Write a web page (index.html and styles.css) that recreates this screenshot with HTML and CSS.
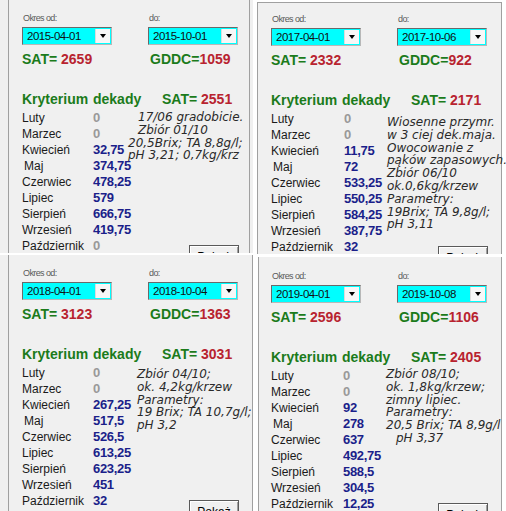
FILE: index.html
```html
<!DOCTYPE html>
<html lang="pl">
<head>
<meta charset="utf-8">
<title>Sumy temperatur aktywnych</title>
<link rel="stylesheet" href="styles.css">
</head>
<body>
<div class="sheet">
  <div class="col col-left">
    <section class="panel tl">
      <div class="frame">
        <div class="range">
          <div class="field"><span class="cap">Okres od:</span><div class="combo"><span class="val">2015-04-01</span><span class="drop"></span></div></div>
          <div class="field"><span class="cap">do:</span><div class="combo"><span class="val">2015-10-01</span><span class="drop"></span></div></div>
        </div>
        <div class="totals"><div><span class="g">SAT=</span> <span class="r">2659</span></div><div><span class="g">GDDC=</span><span class="r">1059</span></div></div>
        <div class="crit"><span class="k">Kryterium</span><span class="d">dekady</span><span>SAT= <span class="r">2551</span></span></div>
        <div class="body">
          <div class="notes"><div class="in">17/06 gradobicie.</div><div class="in">Zbiór 01/10</div><div>20,5Brix; TA 8,8g/l;</div><div>pH 3,21; 0,7kg/krz</div></div>
          <span class="m">Luty</span><span class="v zero">0</span>
          <span class="m">Marzec</span><span class="v zero">0</span>
          <span class="m">Kwiecień</span><span class="v">32,75</span>
          <span class="m maj">Maj</span><span class="v">374,75</span>
          <span class="m">Czerwiec</span><span class="v">478,25</span>
          <span class="m">Lipiec</span><span class="v">579</span>
          <span class="m">Sierpień</span><span class="v">666,75</span>
          <span class="m">Wrzesień</span><span class="v">419,75</span>
          <span class="m">Październik</span><span class="v zero">0</span>
          <button class="show" type="button">Pokaż</button>
        </div>
      </div>
    </section>
    <section class="panel bl">
      <div class="frame">
        <div class="range">
          <div class="field"><span class="cap">Okres od:</span><div class="combo"><span class="val">2018-04-01</span><span class="drop"></span></div></div>
          <div class="field"><span class="cap">do:</span><div class="combo"><span class="val">2018-10-04</span><span class="drop"></span></div></div>
        </div>
        <div class="totals"><div><span class="g">SAT=</span> <span class="r">3123</span></div><div><span class="g">GDDC=</span><span class="r">1363</span></div></div>
        <div class="crit"><span class="k">Kryterium</span><span class="d">dekady</span><span>SAT= <span class="r">3031</span></span></div>
        <div class="body">
          <div class="notes"><div>Zbiór 04/10;</div><div>ok. 4,2kg/krzew</div><div>Parametry:</div><div>19 Brix; TA 10,7g/l;</div><div>pH 3,2</div></div>
          <span class="m">Luty</span><span class="v zero">0</span>
          <span class="m">Marzec</span><span class="v zero">0</span>
          <span class="m">Kwiecień</span><span class="v">267,25</span>
          <span class="m maj">Maj</span><span class="v">517,5</span>
          <span class="m">Czerwiec</span><span class="v">526,5</span>
          <span class="m">Lipiec</span><span class="v">613,25</span>
          <span class="m">Sierpień</span><span class="v">623,25</span>
          <span class="m">Wrzesień</span><span class="v">451</span>
          <span class="m">Październik</span><span class="v">32</span>
          <button class="show" type="button">Pokaż</button>
        </div>
      </div>
    </section>
  </div>
  <div class="col col-right">
    <section class="panel tr">
      <div class="frame">
        <div class="range">
          <div class="field"><span class="cap">Okres od:</span><div class="combo"><span class="val">2017-04-01</span><span class="drop"></span></div></div>
          <div class="field"><span class="cap">do:</span><div class="combo"><span class="val">2017-10-06</span><span class="drop"></span></div></div>
        </div>
        <div class="totals"><div><span class="g">SAT=</span> <span class="r">2332</span></div><div><span class="g">GDDC=</span><span class="r">922</span></div></div>
        <div class="crit"><span class="k">Kryterium</span><span class="d">dekady</span><span>SAT= <span class="r">2171</span></span></div>
        <div class="body">
          <div class="notes"><div>Wiosenne przymr.</div><div>w 3 ciej dek.maja.</div><div>Owocowanie z</div><div>pąków zapasowych.</div><div>Zbiór 06/10</div><div>ok.0,6kg/krzew</div><div>Parametry:</div><div>19Brix; TA 9,8g/l;</div><div>pH 3,11</div></div>
          <span class="m">Luty</span><span class="v zero">0</span>
          <span class="m">Marzec</span><span class="v zero">0</span>
          <span class="m">Kwiecień</span><span class="v">11,75</span>
          <span class="m maj">Maj</span><span class="v">72</span>
          <span class="m">Czerwiec</span><span class="v">533,25</span>
          <span class="m">Lipiec</span><span class="v">550,25</span>
          <span class="m">Sierpień</span><span class="v">584,25</span>
          <span class="m">Wrzesień</span><span class="v">387,75</span>
          <span class="m">Październik</span><span class="v">32</span>
          <button class="show" type="button">Pokaż</button>
        </div>
      </div>
    </section>
    <section class="panel br">
      <div class="frame">
        <div class="range">
          <div class="field"><span class="cap">Okres od:</span><div class="combo"><span class="val">2019-04-01</span><span class="drop"></span></div></div>
          <div class="field"><span class="cap">do:</span><div class="combo"><span class="val">2019-10-08</span><span class="drop"></span></div></div>
        </div>
        <div class="totals"><div><span class="g">SAT=</span> <span class="r">2596</span></div><div><span class="g">GDDC=</span><span class="r">1106</span></div></div>
        <div class="crit"><span class="k">Kryterium</span><span class="d">dekady</span><span>SAT= <span class="r">2405</span></span></div>
        <div class="body">
          <div class="notes"><div>Zbiór 08/10;</div><div>ok. 1,8kg/krzew;</div><div>zimny lipiec.</div><div>Parametry:</div><div>20,5 Brix; TA 8,9g/l</div><div class="in">pH 3,37</div></div>
          <span class="m">Luty</span><span class="v zero">0</span>
          <span class="m">Marzec</span><span class="v zero">0</span>
          <span class="m">Kwiecień</span><span class="v">92</span>
          <span class="m maj">Maj</span><span class="v">278</span>
          <span class="m">Czerwiec</span><span class="v">637</span>
          <span class="m">Lipiec</span><span class="v">492,75</span>
          <span class="m">Sierpień</span><span class="v">588,5</span>
          <span class="m">Wrzesień</span><span class="v">304,5</span>
          <span class="m">Październik</span><span class="v">12,25</span>
          <button class="show" type="button">Pokaż</button>
        </div>
      </div>
    </section>
  </div>
</div>
</body>
</html>
```
FILE: styles.css
```css
html, body {
  margin: 0;
  padding: 0;
}

body {
  width: 506px;
  height: 511px;
  overflow: hidden;
  background: #ffffff;
  font-family: "Liberation Sans", Arial, sans-serif;
  color: #1a1a1a;
}

/* four dialog captures arranged two by two */
.sheet {
  display: flex;
}

.col {
  display: flex;
  flex-direction: column;
  width: 253px;
}

.col-left {
  gap: 2px;
}

.col-right {
  gap: 3px;
}

.panel {
  overflow: hidden;
}

.tl {
  height: 253px;
  background: #f0f0f0;
}

.bl {
  height: 256px;
  background: #f0f0f0;
}

.tr,
.br {
  height: 254px;
}

/* dialog body with its window edges */
.frame {
  box-sizing: border-box;
  height: 100%;
  background: #f0f0f0;
  border-left: 1px solid #a0a0a0;
  border-right: 1px solid #a0a0a0;
}

.tl .frame {
  margin-left: 8px;
  width: 242px;
  padding: 12px 0 0 13px;
}

.bl .frame {
  margin-left: 8px;
  width: 245px;
  padding: 12px 0 0 13px;
}

.tr .frame {
  margin-left: 4px;
  margin-top: 2px;
  width: 245px;
  border-top: 1px solid #a0a0a0;
  padding: 10px 0 0 13px;
}

.br .frame {
  margin-left: 5px;
  width: 244px;
  padding: 13px 0 0 12px;
}

/* date range pickers */
.range {
  display: grid;
  grid-template-columns: 126px auto;
}

.cap {
  display: block;
  height: 12px;
  padding-left: 1px;
  font-size: 9px;
  line-height: 12px;
  letter-spacing: -0.6px;
  color: #5a5a5a;
}

.combo {
  box-sizing: border-box;
  display: flex;
  align-items: stretch;
  width: 90px;
  height: 18px;
  margin-top: 3px;
  background: #00ffff;
  border: 1px solid;
  border-color: #6a6a6a #b8b8b8 #b8b8b8 #6a6a6a;
}

.combo .val {
  flex: 1;
  padding-left: 4px;
  font-size: 11.5px;
  line-height: 16px;
  letter-spacing: -0.5px;
  color: #111111;
}

.combo .drop {
  box-sizing: border-box;
  display: flex;
  align-items: center;
  justify-content: center;
  width: 15px;
  margin: 1px 1px 1px 0;
  background: #f7f7f7;
  border-left: 1px solid #dcdcdc;
}

.combo .drop::after {
  content: "";
  border-left: 3.5px solid transparent;
  border-right: 3.5px solid transparent;
  border-top: 4px solid #000000;
}

/* seasonal totals */
.totals {
  display: grid;
  grid-template-columns: 128px auto;
  margin-top: 6px;
  font-size: 14px;
  font-weight: bold;
  line-height: 16px;
}

.g {
  color: #1b7b1b;
}

.r {
  color: #b8232f;
}

.crit {
  display: flex;
  margin-top: 24px;
  font-size: 14px;
  font-weight: bold;
  line-height: 16px;
  color: #1b7b1b;
}

.crit .k {
  width: 71px;
}

.crit .d {
  width: 69px;
}

/* monthly sums with the season note beside them */
.body {
  display: grid;
  width: 217px;
  grid-auto-rows: 16px;
  margin-top: 3px;
  font-size: 12px;
  line-height: 16px;
}

.tl .body {
  grid-template-columns: 71px 35px minmax(0, 1fr);
}

.tr .body {
  grid-template-columns: 73px 43px minmax(0, 1fr);
}

.bl .body {
  grid-template-columns: 71px 44px minmax(0, 1fr);
}

.br .body {
  grid-template-columns: 72px 43px minmax(0, 1fr);
}

.m {
  grid-column: 1;
  white-space: nowrap;
  color: #1a1a1a;
}

.m.maj {
  padding-left: 2px;
}

.v {
  grid-column: 2;
  white-space: nowrap;
  font-size: 13px;
  font-weight: bold;
  letter-spacing: -0.3px;
  color: #1b1f8a;
}

.v.zero {
  color: #999999;
}

.notes {
  grid-column: 3;
  grid-row: 1 / span 8;
  min-width: 0;
  font-family: "DejaVu Sans", Verdana, sans-serif;
  font-style: italic;
  font-size: 12px;
  line-height: 12.8px;
  white-space: nowrap;
  color: #2a2a2a;
}

.tl .notes {
  margin-top: 1px;
}

.tr .notes {
  margin-top: 5px;
}

.bl .notes {
  margin-top: 3px;
}

.notes .in {
  padding-left: 10px;
}

.show {
  grid-column: 3;
  grid-row: 9;
  justify-self: end;
  align-self: start;
  box-sizing: border-box;
  width: 50px;
  height: 23px;
  margin-top: 7px;
  padding: 1px 0 0;
  font-family: "Liberation Sans", Arial, sans-serif;
  font-size: 12px;
  line-height: 14px;
  text-align: center;
  color: #000000;
  background: #f0f0f0;
  border: 1px solid #5a5a5a;
  box-shadow: inset 1px 1px #ffffff, inset -1px -1px #a0a0a0;
}
```
